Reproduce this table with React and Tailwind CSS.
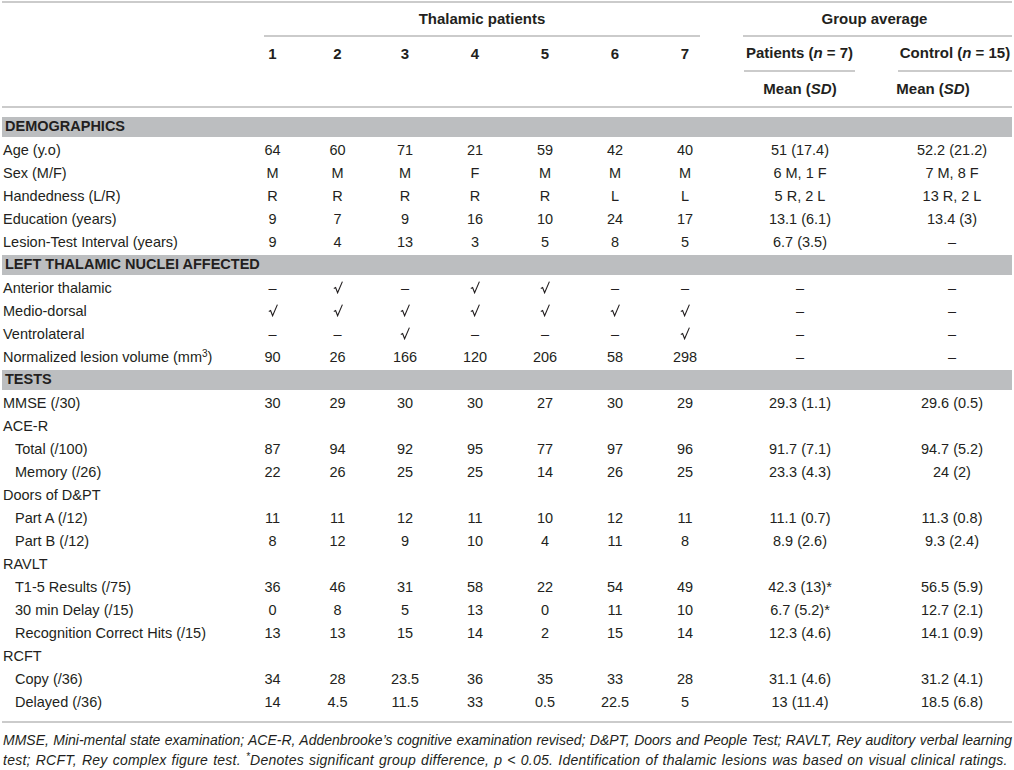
import React from 'react';

const GRID = 'grid grid-cols-[238px_65px_65px_70px_70px_70px_70px_70px_160px_132px]';
const DASH = '–';

// radical-style tick used in the nuclei rows
const Check = () => (
    <svg width="10" height="13" viewBox="0 0 10 13" className="inline-block align-[-1px]">
        <path d="M0.8 7.4 L2.6 6.6 L4.6 11.8 L9.4 0.6" fill="none" stroke="#231f20" strokeWidth="1.1" strokeLinejoin="miter" />
    </svg>
);
const CHECK = <Check />;

const sections = [
    {
        title: 'DEMOGRAPHICS',
        rows: [
            { label: 'Age (y.o)', values: ['64', '60', '71', '21', '59', '42', '40'], patients: '51 (17.4)', control: '52.2 (21.2)' },
            { label: 'Sex (M/F)', values: ['M', 'M', 'M', 'F', 'M', 'M', 'M'], patients: '6 M, 1 F', control: '7 M, 8 F' },
            { label: 'Handedness (L/R)', values: ['R', 'R', 'R', 'R', 'R', 'L', 'L'], patients: '5 R, 2 L', control: '13 R, 2 L' },
            { label: 'Education (years)', values: ['9', '7', '9', '16', '10', '24', '17'], patients: '13.1 (6.1)', control: '13.4 (3)' },
            { label: 'Lesion-Test Interval (years)', values: ['9', '4', '13', '3', '5', '8', '5'], patients: '6.7 (3.5)', control: DASH },
        ],
    },
    {
        title: 'LEFT THALAMIC NUCLEI AFFECTED',
        rows: [
            { label: 'Anterior thalamic', values: [DASH, CHECK, DASH, CHECK, CHECK, DASH, DASH], patients: DASH, control: DASH },
            { label: 'Medio-dorsal', values: [CHECK, CHECK, CHECK, CHECK, CHECK, CHECK, CHECK], patients: DASH, control: DASH },
            { label: 'Ventrolateral', values: [DASH, DASH, CHECK, DASH, DASH, DASH, CHECK], patients: DASH, control: DASH },
            {
                label: (
                    <>
                        Normalized lesion volume (mm<sup className="text-[10px]">3</sup>)
                    </>
                ),
                values: ['90', '26', '166', '120', '206', '58', '298'],
                patients: DASH,
                control: DASH,
            },
        ],
    },
    {
        title: 'TESTS',
        rows: [
            { label: 'MMSE (/30)', values: ['30', '29', '30', '30', '27', '30', '29'], patients: '29.3 (1.1)', control: '29.6 (0.5)' },
            { label: 'ACE-R' },
            { label: 'Total (/100)', indent: true, values: ['87', '94', '92', '95', '77', '97', '96'], patients: '91.7 (7.1)', control: '94.7 (5.2)' },
            { label: 'Memory (/26)', indent: true, values: ['22', '26', '25', '25', '14', '26', '25'], patients: '23.3 (4.3)', control: '24 (2)' },
            { label: 'Doors of D&PT' },
            { label: 'Part A (/12)', indent: true, values: ['11', '11', '12', '11', '10', '12', '11'], patients: '11.1 (0.7)', control: '11.3 (0.8)' },
            { label: 'Part B (/12)', indent: true, values: ['8', '12', '9', '10', '4', '11', '8'], patients: '8.9 (2.6)', control: '9.3 (2.4)' },
            { label: 'RAVLT' },
            { label: 'T1-5 Results (/75)', indent: true, values: ['36', '46', '31', '58', '22', '54', '49'], patients: '42.3 (13)*', control: '56.5 (5.9)' },
            { label: '30 min Delay (/15)', indent: true, values: ['0', '8', '5', '13', '0', '11', '10'], patients: '6.7 (5.2)*', control: '12.7 (2.1)' },
            { label: 'Recognition Correct Hits (/15)', indent: true, values: ['13', '13', '15', '14', '2', '15', '14'], patients: '12.3 (4.6)', control: '14.1 (0.9)' },
            { label: 'RCFT' },
            { label: 'Copy (/36)', indent: true, values: ['34', '28', '23.5', '36', '35', '33', '28'], patients: '31.1 (4.6)', control: '31.2 (4.1)' },
            { label: 'Delayed (/36)', indent: true, values: ['14', '4.5', '11.5', '33', '0.5', '22.5', '5'], patients: '13 (11.4)', control: '18.5 (6.8)' },
        ],
    },
];

const DataRow = ({ row }) => (
    <div className={`${GRID} h-[23px] items-center`}>
        <div className={`whitespace-nowrap ${row.indent ? 'pl-[13px]' : 'pl-[1px]'}`}>{row.label}</div>
        {(row.values || ['', '', '', '', '', '', '']).map((v, i) => (
            <div key={i} className="text-center">{v}</div>
        ))}
        <div className="text-center">{row.patients}</div>
        <div className="text-center pl-[12px]">{row.control}</div>
    </div>
);

const SectionBand = ({ title, first }) => (
    <div className={`${first ? 'mt-[9px]' : 'mt-[1px]'} mb-[2px] h-[20px] bg-[#bcbec0] pl-[3px] flex items-center font-bold text-[14.5px]`}>
        {title}
    </div>
);

export default function App() {
    return (
        <div className="w-[1014px] h-[770px] bg-white pt-[1px] px-[2px] text-[#231f20] text-[14.5px] font-['Liberation_Sans',Arial,sans-serif]">
            {/* header block */}
            <div className="border-t-2 border-b-2 border-[#cbcbcb]">
                <div className={`${GRID} h-[34px]`}>
                    <div />
                    <div className="col-span-7 ml-[24px] mr-[20px] border-b-2 border-[#cbcbcb] flex items-center justify-center font-bold text-[15px]">
                        Thalamic patients
                    </div>
                    <div className="col-span-2 ml-[23px] pr-[6px] border-b-2 border-[#cbcbcb] flex items-center justify-center font-bold text-[15px]">
                        Group average
                    </div>
                </div>
                <div className={`${GRID} h-[35px] font-bold text-[15px]`}>
                    <div />
                    {['1', '2', '3', '4', '5', '6', '7'].map(n => (
                        <div key={n} className="flex items-center justify-center">{n}</div>
                    ))}
                    <div className="ml-[24px] mr-[25px] border-b-2 border-[#cbcbcb] flex items-center justify-center">
                        <span>Patients (<i>n</i> = 7)</span>
                    </div>
                    <div className="ml-[18px] border-b-2 border-[#cbcbcb] flex items-center justify-center whitespace-nowrap">
                        <span>Control (<i>n</i> = 15)</span>
                    </div>
                </div>
                <div className={`${GRID} h-[34px] font-bold text-[15px]`}>
                    <div className="col-span-8" />
                    <div className="flex items-center justify-center">
                        <span>Mean (<i>SD</i>)</span>
                    </div>
                    <div className="flex items-center justify-center pr-[26px]">
                        <span>Mean (<i>SD</i>)</span>
                    </div>
                </div>
            </div>

            {/* body */}
            <div className="border-b-2 border-[#cbcbcb] pb-[7px]">
                {sections.map((section, si) => (
                    <div key={section.title}>
                        <SectionBand title={section.title} first={si === 0} />
                        {section.rows.map((row, ri) => (
                            <DataRow key={ri} row={row} />
                        ))}
                    </div>
                ))}
            </div>

            {/* footnote */}
            <div className="mt-[7px] pl-[1px] italic text-[14px] leading-[20px]">
                <div className="text-justify [text-align-last:justify] whitespace-nowrap">
                    MMSE, Mini-mental state examination; ACE-R, Addenbrooke’s cognitive examination revised; D&amp;PT, Doors and People Test; RAVLT, Rey auditory verbal learning
                </div>
                <div className="whitespace-nowrap tracking-[0.25px] [word-spacing:0.9px]">
                    test; RCFT, Rey complex figure test. <sup className="text-[10px]">*</sup>Denotes significant group difference, <i>p</i> &lt; 0.05. Identification of thalamic lesions was based on visual clinical ratings.
                </div>
            </div>
        </div>
    );
}
